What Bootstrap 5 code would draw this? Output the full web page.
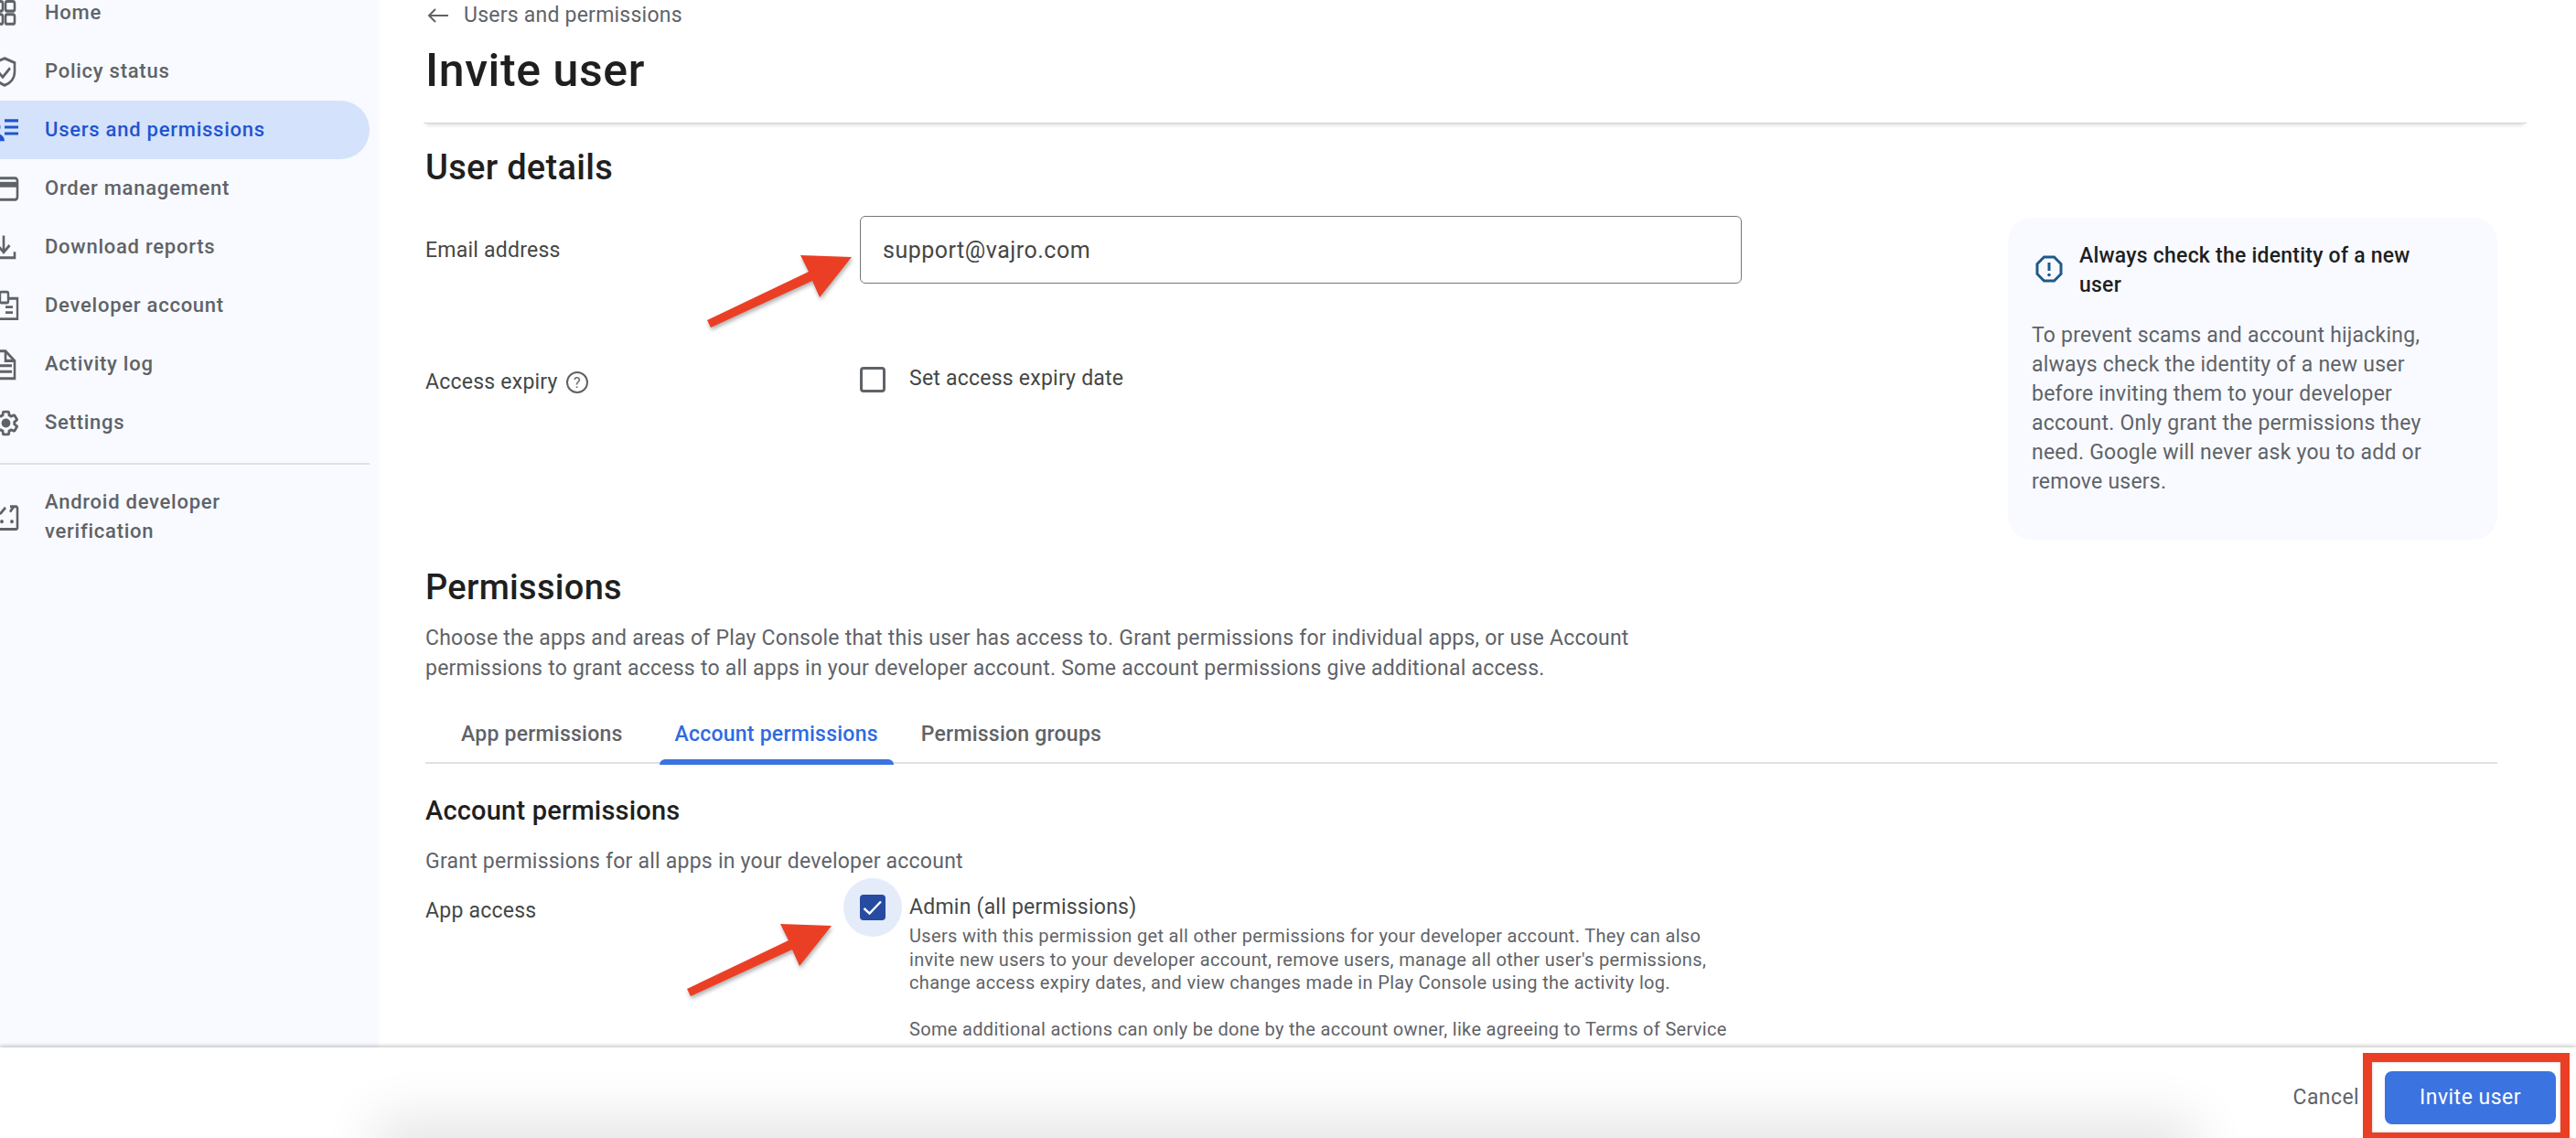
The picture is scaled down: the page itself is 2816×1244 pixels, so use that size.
<!DOCTYPE html>
<html lang="en">
<head>
  <meta charset="UTF-8">
  <meta name="viewport" content="width=device-width, initial-scale=1.0">
  <title>Invite user</title>
  <link href="https://cdn.jsdelivr.net/npm/bootstrap@5.3.0/dist/css/bootstrap.min.css" rel="stylesheet">
  <style>
    html, body { height: 100%; }
    body { font-family: "Roboto", "Liberation Sans", sans-serif; font-size: 23px; color: #444746; letter-spacing: .23px; overflow: hidden; position: relative; }
    .page-top { height: 1145px; }

    .side-bar { width: 414px; flex: none; background: #f8faff; overflow: hidden; }
    .side-list { margin-top: -18px; width: 404px; }
    .side-link { display: flex; align-items: center; gap: 30px; height: 64px; color: #5f6368; font-size: 22px; font-weight: 500; letter-spacing: .75px; line-height: 32px; border-radius: 0 32px 32px 0; }
    .side-link svg { flex: none; margin-left: -9px; overflow: visible; }
    .side-link.current { background: #d4e2fb; color: #1f55d0; }
    .side-link.tall { height: 96px; }
    .side-rule { border-top: 2px solid #dfe1e5; margin: 12px 0 9px; }
    .gear-label { margin-left: -3px; }

    .main-pane { padding: 0 54px 0 51px; overflow: hidden; min-width: 0; }
    .crumb { height: 34px; gap: 17px; color: #5f6368; margin-left: 2px; }
    .page-title { font-size: 50px; line-height: 60px; font-weight: 500; color: #1f1f1f; margin: 13px 0 0; letter-spacing: .6px; }
    .title-rule { height: 28px; margin-left: -2px; border-bottom: 1px solid #d5d5d5; box-shadow: 0 5px 4px -3px rgba(0,0,0,.14); }
    .sect-title { font-size: 38px; line-height: 46px; font-weight: 500; color: #1f1f1f; margin: 0; letter-spacing: .3px; }
    .user-title { margin-top: 25px; }
    .details-row { margin-top: 30px; height: 354px; }
    .label-col { width: 475px; flex: none; }
    .email-label { padding-top: 2px; }
    .email-box.form-control { width: 964px; height: 74px; border: 1px solid #747775; border-radius: 6px; padding: 0 24px; font-size: 25px; color: #444746; letter-spacing: .5px; box-shadow: none; }
    .expiry-row { margin-top: 87px; }
    .expiry-label { margin-top: 6px; gap: 8px; line-height: 30px; }
    .tick.form-check-input { width: 28px; height: 28px; margin: 0; border: 3px solid #5f6368; border-radius: 4px; flex: none; box-shadow: none; }
    .tick.form-check-input:checked { background-color: #264ba0; border: 0; background-size: 100%; background-image: url("data:image/svg+xml,%3csvg xmlns='http://www.w3.org/2000/svg' viewBox='0 0 28 28'%3e%3cpath fill='none' stroke='%23fff' stroke-width='2.4' d='M4.500 15l6 5.500L23 7.500'/%3e%3c/svg%3e"); }
    .tick-label { margin-left: 26px; color: #444746; line-height: 28px; margin-top: -3px; }
    .note-card { width: 535px; margin-left: auto; margin-right: 32px; margin-top: 2px; height: 352px; background: #f8faff; border-radius: 26px; padding: 26px 69px 26px 26px; flex: none; }
    .note-head { gap: 18px; color: #1f1f1f; font-weight: 500; line-height: 32px; margin-left: 4px; }
    .note-head svg { margin-top: 15px; flex: none; }
    .note-body { margin: 23px 0 0; line-height: 32px; color: #5f6368; }
    .perm-title { margin-top: 29px; }
    .perm-desc { margin: 17px 0 0; line-height: 32.5px; color: #5f6368; }
    .tab-strip { margin: 24px 32px 0 0; padding-left: 22px; border-bottom: 2px solid #dfe1e5; height: 64px; }
    .tab-item { height: 64px; line-height: 64px; padding: 0 17px; color: #5f6368; font-weight: 500; position: relative; margin-right: 23px; }
    .tab-item.current { color: #2f6ae0; margin-right: 13px; }
    .tab-item.current::after { content: ""; position: absolute; left: 0; right: 0; bottom: -1px; height: 6px; background: #3b73e0; border-radius: 6px 6px 0 0; }
    .sub-title { font-size: 29px; line-height: 40px; font-weight: 500; color: #1f1f1f; margin: 31px 0 0; letter-spacing: .2px; }
    .sub-desc { margin: 20px 0 0; line-height: 32px; color: #5f6368; }
    .access-row { margin-top: 18px; }
    .access-label { line-height: 32px; margin-top: 4px; }
    .tick-halo { width: 64px; height: 64px; margin: -16px -18px 0; border-radius: 50%; background: #e4ebf9; flex: none; }
    .admin-name { margin-left: 26px; line-height: 32px; color: #444746; }
    .admin-help { font-size: 20px; line-height: 25.5px; color: #5f6368; white-space: nowrap; letter-spacing: .33px; margin-top: 3px; }

    .page-foot { height: 99px; position: relative; background: #fff; box-shadow: 0 -2px 4px rgba(0,0,0,.2); padding: 11px 22px 0 0; gap: 28px; overflow: hidden; }
    .foot-glow { position: absolute; left: 430px; width: 1950px; bottom: -30px; height: 30px; box-shadow: 0 0 60px 20px rgba(0,0,0,.11); }
    .btn.cancel-btn { color: #5f6368; font-size: 23px; font-weight: 400; padding: 0; border: 0; letter-spacing: .4px; position: relative; }
    .btn.invite-btn { width: 187px; height: 58px; background: #3b73e0; border: 0; border-radius: 8px; color: #fff; font-size: 23px; font-weight: 400; padding: 0; letter-spacing: .5px; position: relative; }
    .red-frame { position: absolute; left: 2583px; top: 1151px; width: 226px; height: 97px; border: 10px solid #eb3f25; box-shadow: inset 0 0 3px rgba(0,0,0,.25); }
    .arrow-layer { position: absolute; left: 0; top: 0; pointer-events: none; filter: drop-shadow(1px 3px 2px rgba(0,0,0,.3)); }
  </style>
</head>
<body>
  <div class="page-top d-flex">
    <div class="side-bar">
      <ul class="nav flex-column side-list">
        <li><a class="side-link text-decoration-none" href="#">
          <svg width="28" height="33" viewBox="0 0 28 28" preserveAspectRatio="none" fill="none" stroke="currentColor" stroke-width="2.6"><rect x="2" y="3" width="10" height="9" rx="2"/><rect x="15" y="3" width="10" height="9" rx="2"/><rect x="2" y="15" width="10" height="9" rx="2"/><rect x="15" y="15" width="10" height="9" rx="2"/></svg>Home</a></li>
        <li><a class="side-link text-decoration-none" href="#">
          <svg width="28" height="33" viewBox="0 0 28 28" preserveAspectRatio="none" fill="none" stroke="currentColor" stroke-width="2.6"><path d="M14 1.500 25 5.500V14c0 6-4.500 10.500-11 12.500C7.500 24.500 3 20 3 14V5.500Z"/><path d="M7.500 14.500l4.500 4.500 8-8.500"/></svg>Policy status</a></li>
        <li><a class="side-link current text-decoration-none" href="#">
          <svg width="28" height="33" viewBox="0 0 28 28" preserveAspectRatio="none" fill="none" stroke="currentColor" stroke-width="2.6"><path d="M14 5h15M14 11h15M14 17h15"/><circle cx="5" cy="11" r="4.500" fill="currentColor" stroke="none"/><path d="M-4 24c0-4 4-7 9-7s9 3 9 7Z" fill="currentColor" stroke="none"/></svg>Users and permissions</a></li>
        <li><a class="side-link text-decoration-none" href="#">
          <svg width="28" height="33" viewBox="0 0 28 28" preserveAspectRatio="none" fill="none" stroke="currentColor" stroke-width="2.6"><rect x="0" y="4" width="28" height="20" rx="2.500"/><path d="M0 10h28" stroke-width="5"/></svg>Order management</a></li>
        <li><a class="side-link text-decoration-none" href="#">
          <svg width="28" height="33" viewBox="0 0 28 28" preserveAspectRatio="none" fill="none" stroke="currentColor" stroke-width="2.6"><path d="M13 3v15M6.500 12l6.500 6.500 6.500-6.500M-1 18v5.500h26V18"/></svg>Download reports</a></li>
        <li><a class="side-link text-decoration-none" href="#">
          <svg width="28" height="33" viewBox="0 0 28 28" preserveAspectRatio="none" fill="none" stroke="currentColor" stroke-width="2.4"><path d="M8 7H0v19h28V7h-9"/><rect x="9" y="1" width="9" height="10" rx="1.500"/><path d="M15 15h8M15 20h8"/><circle cx="5" cy="15" r="2.500" fill="currentColor" stroke="none"/><path d="M0 22h9" stroke-width="3"/></svg>Developer account</a></li>
        <li><a class="side-link text-decoration-none" href="#">
          <svg width="28" height="33" viewBox="0 0 28 28" preserveAspectRatio="none" fill="none" stroke="currentColor" stroke-width="2.6"><path d="M0 1.500h15l10 9V27H0Z"/><path d="M15 1.500v9h10M4 15h18M4 20.500h18"/></svg>Activity log</a></li>
        <li><a class="side-link text-decoration-none" href="#">
          <svg width="31" height="31" viewBox="0 0 24 24" fill="none" stroke="currentColor" stroke-width="2.200"><path d="M19.140 12.940c.04-.3.06-.61.06-.94 0-.32-.02-.64-.07-.94l2.030-1.580c.18-.14.23-.41.12-.61l-1.920-3.320c-.12-.22-.37-.29-.59-.22l-2.390.96c-.5-.38-1.030-.7-1.620-.94l-.36-2.540c-.04-.24-.24-.41-.48-.41h-3.840c-.24 0-.43.17-.47.41l-.36 2.540c-.59.24-1.130.57-1.620.94l-2.390-.96c-.22-.08-.47 0-.59.22L2.740 8.870c-.12.21-.08.47.12.61l2.030 1.580c-.05.3-.09.63-.09.94s.02.64.07.94l-2.030 1.580c-.18.14-.23.41-.12.61l1.920 3.320c.12.22.37.29.59.22l2.390-.96c.5.38 1.030.7 1.620.94l.36 2.540c.05.24.24.41.48.41h3.840c.24 0 .44-.17.47-.41l.36-2.540c.59-.24 1.130-.56 1.620-.94l2.390.96c.22.08.47 0 .59-.22l1.920-3.320c.12-.22.07-.47-.12-.61z"/><circle cx="12" cy="12" r="3.800" fill="currentColor" stroke="none"/></svg><span class="gear-label">Settings</span></a></li>
        <li><div class="side-rule"></div></li>
        <li><a class="side-link tall text-decoration-none" href="#">
          <svg width="28" height="33" viewBox="0 0 28 28" preserveAspectRatio="none" fill="none" stroke="currentColor" stroke-width="2.6"><path d="M20 4h6.500a1.500 1.500 0 0 1 1.500 1.500v18a1.500 1.500 0 0 1-1.500 1.500H1.500A1.500 1.500 0 0 1 0 23.500v-18A1.500 1.500 0 0 1 1.500 4H9"/><path d="M9 11 15 5M24 4l-4 5"/><circle cx="11" cy="18" r="1.800" fill="currentColor" stroke="none"/><circle cx="22" cy="18" r="1.800" fill="currentColor" stroke="none"/></svg><span>Android developer<br>verification</span></a></li>
      </ul>
    </div>

    <div class="main-pane flex-grow-1">
      <div class="crumb d-flex align-items-center">
        <svg width="23" height="16" viewBox="0 0 23 16" fill="none" stroke="#5f6368" stroke-width="2"><path d="M23 8H2M9 1 2 8l7 7"/></svg>
        <span>Users and permissions</span>
      </div>
      <h1 class="page-title">Invite user</h1>
      <div class="title-rule"></div>

      <h2 class="sect-title user-title">User details</h2>
      <div class="details-row d-flex">
        <div>
          <div class="d-flex align-items-center">
            <div class="label-col email-label">Email address</div>
            <input class="form-control email-box" type="text" value="support@vajro.com">
          </div>
          <div class="d-flex expiry-row">
            <div class="label-col d-flex align-items-center expiry-label">
              <span>Access expiry</span>
              <svg width="26" height="26" viewBox="0 0 26 26"><circle cx="13" cy="13" r="11" fill="none" stroke="#5f6368" stroke-width="2"/><text x="13" y="19" text-anchor="middle" font-size="16" font-family="Roboto" fill="#5f6368">?</text></svg>
            </div>
            <div class="d-flex align-items-center">
              <input class="form-check-input tick" type="checkbox">
              <span class="tick-label">Set access expiry date</span>
            </div>
          </div>
        </div>
        <div class="note-card">
          <div class="note-head d-flex">
            <svg width="30" height="30" viewBox="0 0 30 30" fill="none" stroke="#1f5a8a" stroke-width="3"><path d="M9.500 2h11L28 9.500v11L20.500 28h-11L2 20.500v-11Z"/><path d="M15 8v9"/><circle cx="15" cy="21.500" r="1.800" fill="#1f5a8a" stroke="none"/></svg>
            <span>Always check the identity of a new user</span>
          </div>
          <p class="note-body">To prevent scams and account hijacking, always check the identity of a new user before inviting them to your developer account. Only grant the permissions they need. Google will never ask you to add or remove users.</p>
        </div>
      </div>

      <h2 class="sect-title perm-title">Permissions</h2>
      <p class="perm-desc">Choose the apps and areas of Play Console that this user has access to. Grant permissions for individual apps, or use Account<br>permissions to grant access to all apps in your developer account. Some account permissions give additional access.</p>

      <div class="tab-strip d-flex">
        <div class="tab-item">App permissions</div>
        <div class="tab-item current">Account permissions</div>
        <div class="tab-item">Permission groups</div>
      </div>

      <h3 class="sub-title">Account permissions</h3>
      <p class="sub-desc">Grant permissions for all apps in your developer account</p>
      <div class="d-flex access-row">
        <div class="label-col access-label">App access</div>
        <div class="d-flex align-items-start">
          <span class="tick-halo d-flex align-items-center justify-content-center"><input class="form-check-input tick" type="checkbox" checked></span>
          <div>
            <div class="admin-name">Admin (all permissions)</div>
            <div class="admin-help tick-label">Users with this permission get all other permissions for your developer account. They can also<br>invite new users to your developer account, remove users, manage all other user's permissions,<br>change access expiry dates, and view changes made in Play Console using the activity log.<br><br>Some additional actions can only be done by the account owner, like agreeing to Terms of Service</div>
          </div>
        </div>
      </div>
    </div>
  </div>

  <div class="page-foot d-flex align-items-center justify-content-end">
    <div class="foot-glow"></div>
    <button class="btn cancel-btn" type="button">Cancel</button>
    <button class="btn invite-btn" type="button">Invite user</button>
  </div>

  <svg class="arrow-layer" width="2816" height="1244" viewBox="0 0 2816 1244">
    <polygon fill="#eb3f25" points="909,1012 853,1010 862,1028 751,1081 755,1089 866,1038 874,1056"/>
    <polygon fill="#eb3f25" points="931,281 875,279 884,297 773,350 777,358 888,307 896,325"/>
  </svg>
  <div class="red-frame"></div>

  <script src="https://cdn.jsdelivr.net/npm/bootstrap@5.3.0/dist/js/bootstrap.bundle.min.js"></script>
</body>
</html>
